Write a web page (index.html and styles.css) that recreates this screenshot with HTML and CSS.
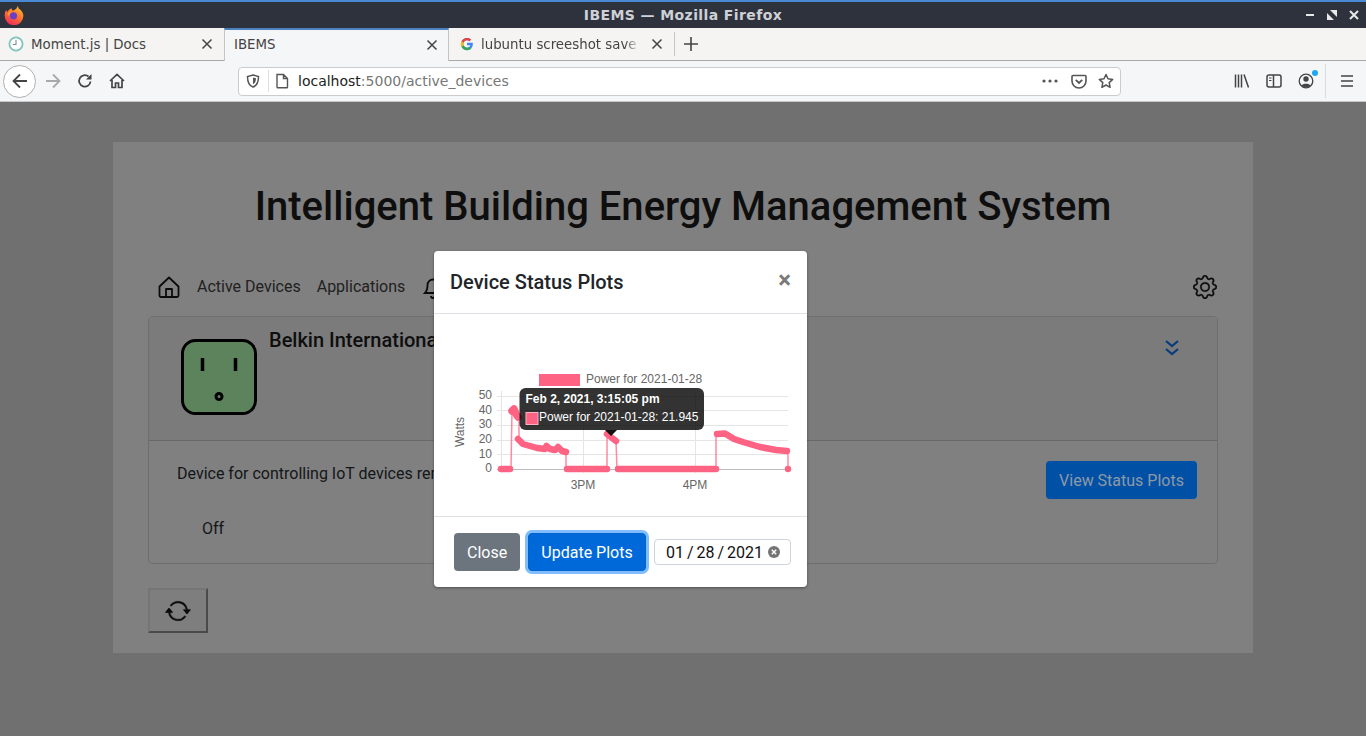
FILE: index.html
```html
<!DOCTYPE html>
<html lang="en">
<head>
    <meta charset="UTF-8">
    <title>IBEMS — Mozilla Firefox</title>
    <link rel="stylesheet" href="styles.css">
</head>
<body>
    <header class="titlebar">
        <svg class="fx-logo" width="20" height="20" viewBox="0 0 20 20">
            <defs>
                <linearGradient id="fxGrad" x1="0.8" y1="0" x2="0.3" y2="1">
                    <stop offset="0" stop-color="#ffc22e"/>
                    <stop offset=".45" stop-color="#ff7a2a"/>
                    <stop offset="1" stop-color="#ee2a5e"/>
                </linearGradient>
            </defs>
            <path d="M13.500 .8c1 1.500 1 2.200 1.200 2.700C17.500 5 19.400 8 19.400 10.800A9.400 9.400 0 0 1 .6 10.800C.6 8.500 1.200 6.500 2.300 5c.2 1 .6 1.500 1.200 2C4.500 4.800 6.300 3.800 8 3.600c-.3 1-.2 1.400.3 2 2-.2 5-1.500 5.200-4.800z" fill="url(#fxGrad)"/>
            <circle cx="9.500" cy="10.800" r="3.600" fill="#6a3fc8"/>
            <path d="M3.500 9.500c.8-2 2.500-3 4.500-3-1.800 1-3 2.200-2.800 4.500z" fill="#ffa32c"/>
        </svg>
        <span class="window-title">IBEMS — Mozilla Firefox</span>
        <div class="window-btns">
            <svg width="12" height="12" viewBox="0 0 12 12"><path d="M2 6h8" stroke="#e8e8e8" stroke-width="2"/></svg>
            <svg width="12" height="12" viewBox="0 0 12 12"><path d="M4 1h7v7zM1 4l7 7H1z" fill="#e8e8e8"/></svg>
            <svg width="12" height="12" viewBox="0 0 12 12"><path d="M2 2l8 8M10 2l-8 8" stroke="#e8e8e8" stroke-width="2"/></svg>
        </div>
    </header>

    <div class="tabbar">
        <div class="tab">
            <svg width="16" height="16" viewBox="0 0 16 16"><circle cx="8" cy="8" r="6.600" fill="#fff" stroke="#7fc4bd" stroke-width="1.800"/><path d="M8 4v4.500H4.800" fill="none" stroke="#7a8a90" stroke-width="1.100"/></svg>
            <span class="tab-label">Moment.js | Docs</span>
            <svg class="tab-close" width="12" height="12" viewBox="0 0 12 12"><path d="M1.500 1.500l9 9M10.500 1.500l-9 9" stroke="#444" stroke-width="1.500"/></svg>
        </div>
        <div class="tab tab-active">
            <span class="tab-label">IBEMS</span>
            <svg class="tab-close" width="12" height="12" viewBox="0 0 12 12"><path d="M1.500 1.500l9 9M10.500 1.500l-9 9" stroke="#444" stroke-width="1.500"/></svg>
        </div>
        <div class="tab tab-last">
            <svg width="14" height="14" viewBox="0 0 48 48">
                <path d="M43.600 20H24v8.500h11.300C33.700 33.400 29.300 36.500 24 36.500c-6.900 0-12.500-5.600-12.500-12.500S17.100 11.500 24 11.500c3.200 0 6.100 1.200 8.300 3.200l6-6C34.500 5.200 29.500 3 24 3 12.400 3 3 12.400 3 24s9.400 21 21 21 20-8.400 20-21c0-1.400-.1-2.700-.4-4z" fill="#4285f4"/>
                <path d="M5.400 14.200l7 5.100C14.200 14.800 18.700 11.500 24 11.500c3.200 0 6.100 1.200 8.300 3.200l6-6C34.500 5.200 29.500 3 24 3 16 3 9 7.600 5.400 14.200z" fill="#ea4335"/>
                <path d="M24 45c5.400 0 10.300-2.100 14-5.400l-6.500-5.500C29.500 35.600 26.900 36.500 24 36.500c-5.300 0-9.700-3.100-11.500-7.900l-7 5.400C9 40.400 16 45 24 45z" fill="#34a853"/>
                <path d="M12.500 28.600c-.6-1.400-1-3-1-4.600s.4-3.200 1-4.700l-7-5.100C4 17 3 20.400 3 24s1 7 2.500 10z" fill="#fbbc05"/>
            </svg>
            <span class="tab-label tab-fade">lubuntu screeshot save l</span>
            <svg class="tab-close" width="12" height="12" viewBox="0 0 12 12"><path d="M1.500 1.500l9 9M10.500 1.500l-9 9" stroke="#444" stroke-width="1.500"/></svg>
        </div>
        <div class="tab-new">
            <svg width="16" height="16" viewBox="0 0 16 16"><path d="M8 1v14M1 8h14" stroke="#444" stroke-width="1.600"/></svg>
        </div>
    </div>

    <div class="toolbar">
        <button class="back-btn">
            <svg width="18" height="18" viewBox="0 0 18 18"><path d="M16 9H2.500M9 2.500L2.500 9 9 15.500" fill="none" stroke="#444" stroke-width="1.800"/></svg>
        </button>
        <svg class="tb-forward" width="18" height="18" viewBox="0 0 18 18"><path d="M2 9h13.500M9 2.500L15.500 9 9 15.500" fill="none" stroke="#aaa" stroke-width="1.800"/></svg>
        <svg class="tb-reload" width="16" height="16" viewBox="0 0 16 16"><path d="M13.500 8.500A5.700 5.700 0 1 1 11.500 3.500" fill="none" stroke="#444" stroke-width="1.800"/><path d="M14.500 1v5.500H9z" fill="#444"/></svg>
        <svg class="tb-home" width="16" height="16" viewBox="0 0 16 16"><path d="M1 8l7-6.500L15 8M3 7v7.500h3.500V10h3v4.500H13V7" fill="none" stroke="#444" stroke-width="1.700"/></svg>

        <div class="urlbar">
            <svg width="14" height="14" viewBox="0 0 14 14"><path d="M7 1l5.500 1.500c0 5-1 9-5.500 10.500C2.500 11.500 1.500 7.500 1.500 2.500z" fill="none" stroke="#555" stroke-width="1.500"/><path d="M7 3.500l3 .8c0 2.700-.8 5-3 6z" fill="#555"/></svg>
            <span class="url-sep"></span>
            <svg class="url-page" width="14" height="16" viewBox="0 0 14 16"><path d="M2 1.500h6.500L12.500 5.500V14a.8.8 0 0 1-.8.800H2.800A.8.800 0 0 1 2 14zM8.500 1.500v4h4" fill="none" stroke="#555" stroke-width="1.400"/></svg>
            <span class="url-text">localhost<span class="url-dim">:5000/active_devices</span></span>
            <svg class="url-dots" width="16" height="4" viewBox="0 0 16 4"><circle cx="2" cy="2" r="1.600" fill="#555"/><circle cx="8" cy="2" r="1.600" fill="#555"/><circle cx="14" cy="2" r="1.600" fill="#555"/></svg>
            <svg width="16" height="15" viewBox="0 0 16 15"><path d="M1 2.500a1 1 0 0 1 1-1h12a1 1 0 0 1 1 1V7a7 7 0 0 1-14 0z" fill="none" stroke="#555" stroke-width="1.600"/><path d="M4.800 5.800L8 9l3.200-3.200" fill="none" stroke="#555" stroke-width="1.800"/></svg>
            <svg class="url-star" width="16" height="16" viewBox="0 0 16 16"><path d="M8 1.500l2 4.300 4.700.6-3.500 3.200.9 4.700L8 12l-4.100 2.300.9-4.700L1.300 6.400 6 5.800z" fill="none" stroke="#555" stroke-width="1.500" stroke-linejoin="round"/></svg>
        </div>

        <div class="tb-right">
            <svg width="16" height="16" viewBox="0 0 16 16"><path d="M1.500 1.500v13M4.500 1.500v13M7.500 1.500v13M10 1.500l4.500 13" stroke="#444" stroke-width="1.500" fill="none"/></svg>
            <svg width="16" height="14" viewBox="0 0 16 14"><rect x="1" y="1" width="14" height="12" rx="2" fill="none" stroke="#444" stroke-width="1.500"/><path d="M7.500 1v12" stroke="#444" stroke-width="1.500"/><path d="M3 4h2.500M3 6.500h2.500" stroke="#444" stroke-width="1.200"/></svg>
            <span class="account">
                <svg width="16" height="16" viewBox="0 0 16 16"><circle cx="8" cy="8" r="6.800" fill="none" stroke="#444" stroke-width="1.300"/><circle cx="8" cy="6" r="2.700" fill="#444"/><path d="M3.500 12.500c1-2.500 8-2.500 9 0-2 2-7 2-9 0z" fill="#444"/></svg>
                <span class="account-dot"></span>
            </span>
            <span class="tb-sep"></span>
            <svg width="14" height="12" viewBox="0 0 14 12"><path d="M1 1h12M1 6h12M1 11h12" stroke="#444" stroke-width="1.500"/></svg>
        </div>
    </div>

    <div class="viewport">
        <main class="container">
            <h1 class="page-title">Intelligent Building Energy Management System</h1>

            <nav class="navbar">
                <svg width="24" height="24" viewBox="0 0 24 24"><path d="M2.500 11.500L12 2.500l9.500 9v9a1.500 1.500 0 0 1-1.500 1.500H4a1.500 1.500 0 0 1-1.500-1.500zM9 22v-8h6v8" fill="none" stroke="#111" stroke-width="1.800" stroke-linejoin="round"/></svg>
                <a class="nav-link" href="#">Active Devices</a>
                <a class="nav-link" href="#">Applications</a>
                <svg class="bell" width="24" height="24" viewBox="0 0 24 24"><path d="M4 18c2-2 2.500-4 2.500-8a5.500 5.500 0 0 1 11 0c0 4 .5 6 2.500 8zM10 21a2 2 0 0 0 4 0" fill="none" stroke="#111" stroke-width="1.800"/></svg>
                <svg class="gear" width="24" height="24" viewBox="0 0 16 16" fill="#111" stroke="#111" stroke-width=".2">
                    <path d="M8 4.754a3.246 3.246 0 1 0 0 6.492 3.246 3.246 0 0 0 0-6.492zM5.754 8a2.246 2.246 0 1 1 4.492 0 2.246 2.246 0 0 1-4.492 0z"/>
                    <path d="M9.796 1.343c-.527-1.790-3.065-1.790-3.592 0l-.094.319a.873.873 0 0 1-1.255.52l-.292-.16c-1.640-.892-3.433.902-2.540 2.541l.159.292a.873.873 0 0 1-.52 1.255l-.319.094c-1.790.527-1.790 3.065 0 3.592l.319.094a.873.873 0 0 1 .52 1.255l-.16.292c-.892 1.640.901 3.434 2.541 2.540l.292-.159a.873.873 0 0 1 1.255.52l.094.319c.527 1.790 3.065 1.790 3.592 0l.094-.319a.873.873 0 0 1 1.255-.52l.292.16c1.640.893 3.434-.902 2.540-2.541l-.159-.292a.873.873 0 0 1 .52-1.255l.319-.094c1.790-.527 1.790-3.065 0-3.592l-.319-.094a.873.873 0 0 1-.52-1.255l.16-.292c.893-1.640-.902-3.433-2.541-2.540l-.292.159a.873.873 0 0 1-1.255-.52l-.094-.319zm-2.633.283c.246-.835 1.428-.835 1.674 0l.094.319a1.873 1.873 0 0 0 2.693 1.115l.291-.16c.764-.415 1.600.42 1.184 1.185l-.159.292a1.873 1.873 0 0 0 1.116 2.692l.318.094c.835.246.835 1.428 0 1.674l-.319.094a1.873 1.873 0 0 0-1.115 2.693l.16.291c.415.764-.42 1.600-1.185 1.184l-.291-.159a1.873 1.873 0 0 0-2.693 1.116l-.094.318c-.246.835-1.428.835-1.674 0l-.094-.319a1.873 1.873 0 0 0-2.692-1.115l-.292.16c-.764.415-1.600-.42-1.184-1.185l.159-.291A1.873 1.873 0 0 0 1.945 8.930l-.319-.094c-.835-.246-.835-1.428 0-1.674l.319-.094A1.873 1.873 0 0 0 3.060 4.377l-.16-.292c-.415-.764.42-1.600 1.185-1.184l.292.159a1.873 1.873 0 0 0 2.692-1.115l.094-.319z"/>
                </svg>
            </nav>

            <section class="card">
                <div class="card-header">
                    <svg class="plug" width="76" height="76" viewBox="0 0 76 76">
                        <rect x="1.500" y="1.500" width="73" height="73" rx="13" fill="#8fc98f" stroke="#000" stroke-width="3"/>
                        <path d="M21.500 19v13M54.500 19v13" stroke="#000" stroke-width="3.500"/>
                        <circle cx="38" cy="57.500" r="3" fill="none" stroke="#000" stroke-width="3"/>
                    </svg>
                    <h2 class="device-name">Belkin International WeMo Switch</h2>
                    <svg class="chevrons" width="16" height="18" viewBox="0 0 16 18"><path d="M2 2l6 5 6-5M2 10l6 5 6-5" fill="none" stroke="#0a5cc4" stroke-width="2.200"/></svg>
                </div>
                <div class="card-body">
                    <div class="card-row">
                        <p class="device-desc">Device for controlling IoT devices remotely over the network</p>
                        <button class="btn btn-view">View Status Plots</button>
                    </div>
                    <p class="device-state">Off</p>
                </div>
            </section>

            <button class="refresh-btn">
                <svg width="26" height="26" viewBox="0 0 16 16" fill="#111" stroke="#111" stroke-width=".2">
                    <path d="M11.534 7h3.932a.25.25 0 0 1 .192.41l-1.966 2.360a.25.25 0 0 1-.384 0l-1.966-2.360a.25.25 0 0 1 .192-.41zm-11 2h3.932a.25.25 0 0 0 .192-.41L2.692 6.230a.25.25 0 0 0-.384 0L.342 8.590A.25.25 0 0 0 .534 9z"/>
                    <path d="M8 3c-1.552 0-2.940.707-3.857 1.818a.5.5 0 1 1-.771-.636A6.002 6.002 0 0 1 13.917 7H12.900A5.002 5.002 0 0 0 8 3zM3.100 9a5.002 5.002 0 0 0 8.757 2.182.5.5 0 1 1 .771.636A6.002 6.002 0 0 1 2.083 9H3.100z"/>
                </svg>
            </button>
        </main>

        <div class="backdrop"></div>

        <div class="modal">
            <div class="modal-header">
                <h5 class="modal-title">Device Status Plots</h5>
                <span class="modal-close">×</span>
            </div>
            <div class="modal-body">
                <svg class="chart" width="373" height="202" viewBox="434 314 373 202">
                    <g stroke="#e5e5e5" stroke-width="1">
                        <path d="M497 396.500H788M497 410.500H788M497 425.500H788M497 440.500H788M497 454.500H788"/>
                        <path d="M501.500 391V473M583.500 391V473M695.500 391V473"/>
                    </g>
                    <path d="M497 469.500H788" stroke="#bbb"/>
                    <rect x="539" y="374" width="41" height="12" fill="#ff6384"/>
                    <text class="chart-text" x="586" y="383">Power for 2021-01-28</text>
                    <g class="chart-text" text-anchor="end">
                        <text x="492" y="399">50</text>
                        <text x="492" y="414">40</text>
                        <text x="492" y="428">30</text>
                        <text x="492" y="443">20</text>
                        <text x="492" y="458">10</text>
                        <text x="492" y="472">0</text>
                    </g>
                    <text class="chart-text" text-anchor="middle" x="583" y="489">3PM</text>
                    <text class="chart-text" text-anchor="middle" x="695" y="489">4PM</text>
                    <text class="chart-text" text-anchor="middle" transform="translate(464 432) rotate(-90)">Watts</text>

                    <path d="M511 469L512 410M519 418V439M566 452V469M607 469V434M616 441L617 469M716 469V434M788 451V469" fill="none" stroke="#ff6384" stroke-opacity=".75" stroke-width="1.500"/>
                    <g fill="none" stroke="#ff6384" stroke-width="6.500" stroke-linecap="round" stroke-linejoin="round">
                        <path d="M501 469H510"/>
                        <path d="M512 411L514 409L516 414L518 417" stroke-width="7.500"/>
                        <path d="M518 439L523 444L530 446L537 448L545 449L546.500 446L550 449L555 450L558 447L562 451L566 452"/>
                        <path d="M567 469H607"/>
                        <path d="M607 434L616 441"/>
                        <path d="M618 469H716"/>
                        <path d="M717 434L725 433.500L734 439L743 442L760 447L776 450L787 451"/>
                    </g>
                    <circle cx="788" cy="469" r="3.200" fill="#ff6384"/>

                    <g class="tooltip">
                        <path d="M611 436l-6-6h12z" fill="#111"/>
                        <rect x="519.500" y="388" width="184.500" height="42" rx="6" fill="#000" fill-opacity=".8"/>
                        <text class="tip-title" x="525.500" y="403">Feb 2, 2021, 3:15:05 pm</text>
                        <rect x="526" y="412.500" width="12" height="12" fill="#ff6384" stroke="#ffb1c1"/>
                        <text class="tip-text" x="539" y="421">Power for 2021-01-28: 21.945</text>
                    </g>
                </svg>
            </div>
            <div class="modal-footer">
                <button class="btn btn-close">Close</button>
                <button class="btn btn-update">Update Plots</button>
                <div class="date-input">
                    <span class="date-value">01 / 28 / 2021</span>
                    <svg width="12" height="12" viewBox="0 0 12 12"><circle cx="6" cy="6" r="6" fill="#757575"/><path d="M3.800 3.800l4.400 4.400M8.200 3.800l-4.400 4.400" stroke="#fff" stroke-width="1.400"/></svg>
                </div>
            </div>
        </div>
    </div>
</body>
</html>
```

FILE: styles.css
```css
* {
    box-sizing: border-box;
}
body {
    margin: 0;
    height: 736px;
    overflow: hidden;
    display: flex;
    flex-direction: column;
    font-family: Roboto, sans-serif;
    font-size: 16px;
    color: #212529;
}

/* window title bar */
.titlebar {
    height: 28px;
    flex: none;
    display: flex;
    align-items: center;
    justify-content: center;
    background: #2e323d;
    border-top: 2px solid #4a8ad4;
    position: relative;
    font-family: "DejaVu Sans", sans-serif;
}
.fx-logo {
    position: absolute;
    left: 4px;
    top: 3px;
}
.window-title {
    color: #ced1d6;
    font-size: 14px;
    font-weight: bold;
    letter-spacing: .4px;
}
.window-btns {
    position: absolute;
    right: 6px;
    top: 7px;
    display: flex;
    gap: 10px;
}

/* tabs */
.tabbar {
    height: 33px;
    flex: none;
    display: flex;
    background: #f5f4f2;
    border-bottom: 1px solid #a8a8a8;
    font-family: "DejaVu Sans", sans-serif;
    font-size: 13.33px;
    color: #444;
}
.tab {
    width: 224px;
    display: flex;
    align-items: center;
    gap: 7px;
    padding: 0 11px 0 8px;
}
.tab-active {
    width: 225px;
    height: 33px;
    padding: 0 10px 2px 9px;
    background: #f5f6f7;
    border-top: 2px solid #4d82c0;
    border-left: 1px solid #c4c4c4;
    border-right: 1px solid #c4c4c4;
}
.tab-last {
    width: 226px;
    border-right: 1px solid #c4c4c4;
    padding: 0 11px 0 11px;
    margin: 4px 0;
}
.tab-label {
    flex: 1;
    white-space: nowrap;
    overflow: hidden;
}
.tab-fade {
    -webkit-mask-image: linear-gradient(to right, #000 88%, transparent 98%);
}
.tab-close {
    flex: none;
}
.tab-new {
    width: 31px;
    display: flex;
    align-items: center;
    justify-content: center;
}

/* nav toolbar */
.toolbar {
    height: 41px;
    flex: none;
    display: flex;
    align-items: center;
    padding-left: 3px;
    background: #f5f6f7;
    border-bottom: 1px solid #c8c8c8;
    font-family: "DejaVu Sans", sans-serif;
}
.back-btn {
    width: 33px;
    height: 33px;
    padding: 0;
    display: flex;
    align-items: center;
    justify-content: center;
    background: #fff;
    border: 1px solid #b0b0b0;
    border-radius: 50%;
}
.tb-forward {
    margin-left: 8px;
}
.tb-reload {
    margin-left: 15px;
}
.tb-home {
    margin-left: 16px;
}
.urlbar {
    width: 883px;
    height: 29px;
    margin-left: 113px;
    display: flex;
    align-items: center;
    gap: 8px;
    padding: 0 6px 0 7px;
    background: #fff;
    border: 1px solid #ccc;
    border-radius: 4px;
    font-size: 14px;
}
.url-sep {
    width: 1px;
    height: 22px;
    background: #e0e0e0;
}
.url-page {
    margin-left: -2px;
}
.url-text {
    flex: 1;
    margin-left: 1px;
    color: #222;
}
.url-dim {
    color: #777;
}
.url-dots {
    margin-right: 5px;
}
.url-star {
    margin-left: 3px;
}
.tb-right {
    display: flex;
    align-items: center;
    gap: 16px;
    margin-left: 113px;
}
.account {
    position: relative;
    display: flex;
}
.account-dot {
    position: absolute;
    top: -3px;
    right: -4px;
    width: 6px;
    height: 6px;
    border-radius: 50%;
    background: #1ea7f2;
}
.tb-sep {
    width: 1px;
    height: 34px;
    background: #dcdcdc;
    margin: 0 -2px 0 -5px;
}

/* page */
.viewport {
    flex: 1;
    position: relative;
    background: #acacac;
    padding-top: 40px;
    overflow: hidden;
}
.container {
    width: 1140px;
    height: 511px;
    margin-left: 113px;
    padding: 36px 35px 0;
    background: #c5c5c5;
}
.page-title {
    margin: 0;
    text-align: center;
    font-size: 40px;
    font-weight: 500;
    line-height: 58px;
    color: #161616;
}
.navbar {
    margin-top: 26px;
    height: 50px;
    display: flex;
    align-items: center;
    padding: 0 1px 0 9px;
}
.nav-link {
    margin: -2px 0 0 16px;
    color: #333;
    text-decoration: none;
}
.bell {
    margin-left: 16px;
}
.gear {
    margin-left: auto;
}
.card {
    height: 248px;
    margin-top: 4px;
    border: 1px solid #aaa;
    border-radius: 4px;
}
.card-header {
    height: 124px;
    display: flex;
    padding: 11px 37px 0 32px;
    background: #bdbdbd;
    border-bottom: 1px solid #a0a0a0;
}
.plug {
    flex: none;
    margin-top: 11px;
}
.device-name {
    margin: 0 0 0 12px;
    font-size: 20px;
    font-weight: 500;
    line-height: 1.2;
    color: #161616;
}
.chevrons {
    margin: 11px 0 0 auto;
}
.card-body {
    padding: 20px 20px 0 28px;
}
.card-row {
    display: flex;
    justify-content: space-between;
    align-items: flex-start;
}
.device-desc {
    margin: 3px 0 0;
}
.device-state {
    margin: 20px 0 0 25px;
}
.btn {
    font-family: inherit;
    font-size: 16px;
    line-height: 1.5;
    padding: 7px 12px 5px;
    border: 1px solid transparent;
    border-radius: 4px;
    color: #fff;
}
.btn-view {
    background: #007bff;
    color: rgba(255, 255, 255, .85);
    width: 151px;
    height: 38px;
}
.refresh-btn {
    display: flex;
    align-items: center;
    justify-content: center;
    width: 60px;
    height: 45px;
    margin-top: 24px;
    background: #c2c2c2;
    border: 2px solid;
    border-color: #b4b4b4 #727272 #727272 #b4b4b4;
    padding: 0;
}

/* dark layer + dialog */
.backdrop {
    position: absolute;
    inset: 0;
    background: rgba(0, 0, 0, .35);
}
.modal {
    position: absolute;
    left: 434px;
    top: 149px;
    width: 373px;
    height: 336px;
    display: flex;
    flex-direction: column;
    background: #fff;
    border-radius: 4px;
    box-shadow: 0 1px 3px rgba(0, 0, 0, .4);
}
.modal-header {
    height: 63px;
    flex: none;
    display: flex;
    align-items: center;
    justify-content: space-between;
    padding: 0 16px 0 16px;
    border-bottom: 1px solid #dee2e6;
}
.modal-title {
    margin: 0;
    font-size: 20px;
    font-weight: 500;
}
.modal-close {
    font-size: 24px;
    font-weight: bold;
    color: #7a7a7a;
    margin-top: -4px;
}
.modal-body {
    height: 202px;
    flex: none;
}
.chart {
    display: block;
}
.chart-text {
    font-family: "Liberation Sans", sans-serif;
    font-size: 12px;
    fill: #666;
}
.tip-title {
    font-family: "Liberation Sans", sans-serif;
    font-size: 12px;
    font-weight: bold;
    fill: #fff;
}
.tip-text {
    font-family: "Liberation Sans", sans-serif;
    font-size: 12px;
    fill: #fff;
}
.modal-footer {
    flex: 1;
    display: flex;
    align-items: center;
    gap: 8px;
    padding-left: 20px;
    border-top: 1px solid #dee2e6;
}
.btn-close {
    width: 66px;
    height: 38px;
    background: #6c757d;
}
.btn-update {
    width: 118px;
    height: 38px;
    background: #0069d9;
    box-shadow: 0 0 0 3px #80bdff;
    border-color: #0062cc;
}
.date-input {
    width: 137px;
    height: 26px;
    display: flex;
    align-items: center;
    justify-content: space-between;
    padding: 0 10px 0 11px;
    border: 1px solid #ced4da;
    border-radius: 4px;
    color: #111;
}
.date-value {
    word-spacing: -1px;
}
```
